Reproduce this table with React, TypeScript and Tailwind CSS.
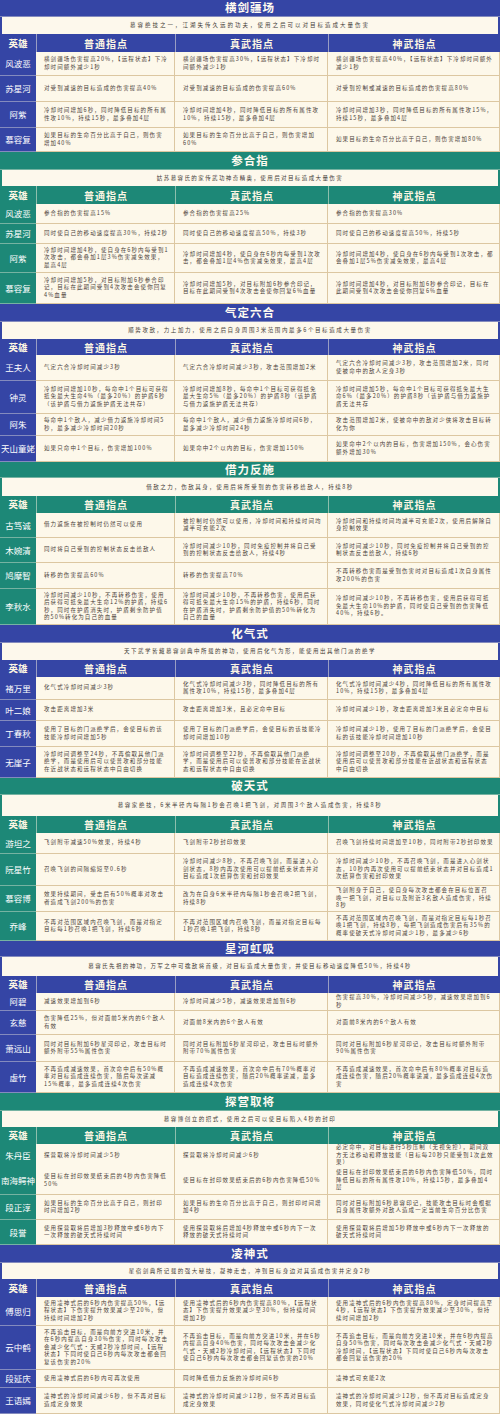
import React from "react";

type Row = { name: string; h: string; cells: [string, string, string] };
type Sec = {
  title: string;
  desc: string;
  track: string;
  theme: "blue" | "teal";
  titleH: string;
  descH: string;
  headH: string;
  rows: Row[];
};

const THEME = {
  blue: { bg: "bg-[#3545a5]", edge: "border-[#3545a5]" },
  teal: { bg: "bg-[#1d8877]", edge: "border-[#1d8877]" },
};

const sections: Sec[] = [
  {
    title: "横剑疆场",
    desc: "慕容绝技之一，江湖失传久远的功夫，使用之后可以对目标造成大量伤害",
    track: "tracking-[2px]",
    theme: "blue",
    titleH: "h-[17px]",
    descH: "h-[17px]",
    headH: "h-[18px]",
    rows: [
      {
        name: "风波恶",
        h: "h-[24px]",
        cells: [
          "横剑疆场伤害提高20%，【远程状态】下冷却时间额外减少1秒",
          "横剑疆场伤害提高30%，【远程状态】下冷却时间额外减少1秒",
          "横剑疆场伤害提高40%，【远程状态】下冷却时间额外减少1秒",
        ],
      },
      {
        name: "苏星河",
        h: "h-[26px]",
        cells: [
          "对受到减速的目标造成的伤害提高40%",
          "对受到减速的目标造成的伤害提高60%",
          "对受到控制或减速的目标造成的伤害提高80%",
        ],
      },
      {
        name: "阿紫",
        h: "h-[26px]",
        cells: [
          "冷却时间增加6秒，同时降低目标的所有属性攻10%，持续15秒，最多叠加4层",
          "冷却时间增加4秒，同时降低目标的所有属性攻10%，持续15秒，最多叠加4层",
          "冷却时间增加3秒，同时降低目标的所有属性攻15%，持续15秒，最多叠加4层",
        ],
      },
      {
        name: "慕容复",
        h: "h-[24px]",
        cells: [
          "如果目标的生命百分比高于自己，则伤害增加40%",
          "如果目标的生命百分比高于自己，则伤害增加60%",
          "如果目标的生命百分比高于自己，则伤害增加80%",
        ],
      },
    ],
  },
  {
    title: "参合指",
    desc: "姑苏慕容氏的家传武功神奇精奥，使用后对目标造成大量伤害",
    track: "tracking-[1.4px]",
    theme: "teal",
    titleH: "h-[18px]",
    descH: "h-[16px]",
    headH: "h-[18px]",
    rows: [
      {
        name: "风波恶",
        h: "h-[20px]",
        cells: ["参合指的伤害提高15%", "参合指的伤害提高25%", "参合指的伤害提高30%"],
      },
      {
        name: "苏星河",
        h: "h-[20px]",
        cells: [
          "同时使自己的移动速度提高30%，持续2秒",
          "同时使自己的移动速度提高50%，持续3秒",
          "同时使自己的移动速度提高50%，持续5秒",
        ],
      },
      {
        name: "阿紫",
        h: "h-[29px]",
        cells: [
          "冷却时间增加4秒，使自身在6秒内每受到1次攻击，都会叠加1层3%伤害减免效果，最高4层",
          "冷却时间增加4秒，使自身在6秒内每受到1次攻击，都会叠加1层4%伤害减免效果，最高4层",
          "冷却时间增加4秒，使自身在6秒内每受到1次攻击，都会叠加1层5%伤害减免效果，最高4层",
        ],
      },
      {
        name: "慕容复",
        h: "h-[31px]",
        cells: [
          "冷却时间增加5秒，对目标附加6秒参合印记，目标在此期间受到4次攻击会使你回复4%血量",
          "冷却时间增加5秒，对目标附加6秒参合印记，目标在此期间受到4次攻击会使你回复6%血量",
          "冷却时间增加4秒，对目标附加6秒参合印记，目标在此期间受到4次攻击会使你回复6%血量",
        ],
      },
    ],
  },
  {
    title: "气定六合",
    desc: "顺势攻敌，力上加力，使用之后自身周围3米范围内最多6个目标造成大量伤害",
    track: "tracking-[1.6px]",
    theme: "blue",
    titleH: "h-[18px]",
    descH: "h-[17px]",
    headH: "h-[16px]",
    rows: [
      {
        name: "王夫人",
        h: "h-[26px]",
        cells: [
          "气定六合冷却时间减少3秒",
          "气定六合冷却时间减少3秒，攻击范围增加2米",
          "气定六合冷却时间减少3秒，攻击范围增加2米，同时使被命中的敌人定身3秒",
        ],
      },
      {
        name: "钟灵",
        h: "h-[33px]",
        cells: [
          "冷却时间增加10秒，每命中1个目标可获得抵免最大生命4%（最多20%）的护盾6秒（该护盾与借力返施护盾无法共存）",
          "冷却时间增加8秒，每命中1个目标可获得抵免最大生命5%（最多20%）的护盾8秒（该护盾与借力返施护盾无法共存）",
          "冷却时间增加5秒，每命中1个目标可获得抵免最大生命6%（最多20%）的护盾8秒（该护盾与借力返施护盾无法共存",
        ],
      },
      {
        name: "阿朱",
        h: "h-[22px]",
        cells: [
          "每命中1个敌人，减少借力返施冷却时间5秒，最多减少冷却时间20秒",
          "每命中1个敌人，减少借力返施冷却时间6秒，最多减少冷却时间24秒",
          "攻击范围增加2米，使被命中的敌对少侠将攻击目标转化为你",
        ],
      },
      {
        name: "天山童姥",
        h: "h-[26px]",
        cells: [
          "如果只命中1个目标，伤害增加100%",
          "如果命中2个以内的目标，伤害增加150%",
          "如果命中2个以内的目标，伤害增加150%，会心伤害额外增加30%",
        ],
      },
    ],
  },
  {
    title: "借力反施",
    desc: "借敌之力，伤敌其身，使用后将所受到的伤害转移给敌人，持续8秒",
    track: "tracking-[1.5px]",
    theme: "teal",
    titleH: "h-[16px]",
    descH: "h-[18px]",
    headH: "h-[17px]",
    rows: [
      {
        name: "古笃诚",
        h: "h-[25px]",
        cells: [
          "借力返施在被控制时仍然可以使用",
          "被控制时仍然可以使用，冷却时间和持续时间均减半可充能2次",
          "冷却时间和持续时间均减半可充能2次，使用后解除自身控制效果",
        ],
      },
      {
        name: "木婉清",
        h: "h-[25px]",
        cells: [
          "同时将自己受到的控制状态反击给敌人",
          "冷却时间减少10秒，同时免疫控制并将自己受到的控制状态反击给敌人，持续4秒",
          "冷却时间减少10秒，同时免疫控制并将自己受到的控制状态反击给敌人，持续6秒",
        ],
      },
      {
        name: "鸠摩智",
        h: "h-[26px]",
        cells: [
          "转移的伤害提高60%",
          "转移的伤害提高70%",
          "不再转移伤害而是受到伤害时对目标造成1次自身属性攻200%的伤害",
        ],
      },
      {
        name: "李秋水",
        h: "h-[36px]",
        cells: [
          "冷却时间减少10秒，不再转移伤害，使用后获得可抵免最大生命12%的护盾，持续6秒，同时在护盾消失时，护盾剩余防护值的50%转化为自己的血量",
          "冷却时间减少10秒，不再转移伤害，使用后获得可抵免最大生命15%的护盾，持续6秒，同时在护盾消失时，护盾剩余防护值的50%转化为自己的血量",
          "冷却时间减少10秒，不再转移伤害，使用后获得可抵免最大生命10%的护盾，同时使自己受到的伤害降低40%，持续6秒。",
        ],
      },
    ],
  },
  {
    title: "化气式",
    desc: "天下武学皆藏慕容剑典中所载的神功，使用后化气为形，能使用出其他门派的绝学",
    track: "tracking-[1.5px]",
    theme: "blue",
    titleH: "h-[18px]",
    descH: "h-[17px]",
    headH: "h-[17px]",
    rows: [
      {
        name: "褚万里",
        h: "h-[23px]",
        cells: [
          "化气式冷却时间减少3秒",
          "化气式冷却时间减少3秒，同时降低目标的所有属性攻10%，持续15秒，最多叠加4层",
          "化气式冷却时间减少4秒，同时降低目标的所有属性攻10%，持续15秒，最多叠加4层",
        ],
      },
      {
        name: "叶二娘",
        h: "h-[21px]",
        cells: [
          "攻击距离增加3米",
          "攻击距离增加3米，且必定命中目标",
          "冷却时间减少1秒，攻击距离增加3米且必定命中目标",
        ],
      },
      {
        name: "丁春秋",
        h: "h-[26px]",
        cells: [
          "使用了目标的门派绝学后，会使目标的该技能冷却时间增加5秒",
          "使用了目标的门派绝学后，会使目标的该技能冷却时间增加10秒",
          "冷却时间减少1秒，使用了目标的门派绝学后，会使目标的该技能冷却时间增加10秒",
        ],
      },
      {
        name: "无崖子",
        h: "h-[31px]",
        cells: [
          "冷却时间调整至24秒，不再偷取其他门派绝学，而是使用后可以使普攻和部分技能在近战状态和远程状态中自由切换",
          "冷却时间调整至22秒，不再偷取其他门派绝学，而是使用后可以使普攻和部分技能在近战状态和远程状态中自由切换",
          "冷却时间调整至20秒，不再偷取其他门派绝学，而是使用后可以使普攻和部分技能在近战状态和远程状态中自由切换",
        ],
      },
    ],
  },
  {
    title: "破天式",
    desc: "慕容家绝技，6米半径内每隔1秒会召唤1把飞剑，对周围3个敌人造成伤害，持续8秒",
    track: "tracking-[1.6px]",
    theme: "teal",
    titleH: "h-[17px]",
    descH: "h-[21px]",
    headH: "h-[17px]",
    rows: [
      {
        name: "游坦之",
        h: "h-[21px]",
        cells: [
          "飞剑附带减速50%效果，持续4秒",
          "飞剑附带2秒封印效果",
          "召唤飞剑持续时间增加至10秒，同时附带2秒封印效果",
        ],
      },
      {
        name: "阮星竹",
        h: "h-[32px]",
        cells: [
          "召唤飞剑的间隔缩短至0.6秒",
          "冷却时间减少8秒，不再召唤飞剑，而是进入心剑状态，8秒内再次使用可以提前结束状态并对目标造成1次结算伤害和封印效果",
          "冷却时间减少10秒，不再召唤飞剑，而是进入心剑状态，10秒内再次使用可以提前结束状态并对目标造成1次结算伤害和封印效果",
        ],
      },
      {
        name: "慕容博",
        h: "h-[26px]",
        cells: [
          "效果持续期间，受击后有50%概率对攻击者造成飞剑200%的伤害",
          "改为在自身6米半径内每隔1秒会召唤2把飞剑，持续8秒",
          "飞剑附身于自己，使自身每次攻击都会在目标位置召唤一把飞剑，对目标以及附近3名敌人造成伤害，持续8秒",
        ],
      },
      {
        name: "乔峰",
        h: "h-[29px]",
        cells: [
          "不再对范围区域内召唤飞剑，而是对指定目标每1秒召唤1把飞剑，持续6秒",
          "不再对范围区域内召唤飞剑，而是对指定目标每1秒召唤1把飞剑，持续8秒",
          "不再对范围区域内召唤飞剑，而是对指定目标每1秒召唤1把飞剑，持续8秒，每把飞剑造成伤害后有35%的概率使破天式冷却时间减少1秒，最多减少6秒",
        ],
      },
    ],
  },
  {
    title: "星河虹吸",
    desc: "慕容氏先祖的神功，万军之中可擒敌将首级，对目标造成大量伤害，并使目标移动速度降低50%，持续4秒",
    track: "tracking-[1.4px]",
    theme: "blue",
    titleH: "h-[16px]",
    descH: "h-[19px]",
    headH: "h-[17px]",
    rows: [
      {
        name: "阿碧",
        h: "h-[18px]",
        cells: [
          "减速效果增加到6秒",
          "冷却时间减少5秒，减速效果增加到6秒",
          "伤害提高30%，冷却时间减少5秒，减速效果增加到6秒",
        ],
      },
      {
        name: "玄慈",
        h: "h-[24px]",
        cells: [
          "伤害降低25%，但对面前5米内的6个敌人有效",
          "对面前8米内的6个敌人有效",
          "对面前8米内的6个敌人有效",
        ],
      },
      {
        name: "萧远山",
        h: "h-[27px]",
        cells: [
          "同时对目标附加6秒星河印记，攻击目标时额外附带55%属性伤害",
          "同时对目标附加6秒星河印记，攻击目标时额外附带70%属性伤害",
          "同时对目标附加6秒星河印记，攻击目标时额外附带90%属性伤害",
        ],
      },
      {
        name: "虚竹",
        h: "h-[31px]",
        cells: [
          "不再造成减速效果，首次命中后有50%概率对目标造成连续伤害，随后每次递减15%概率，最多造成连续4次伤害",
          "不再造成减速效果，首次命中后有70%概率对目标造成连续伤害，随后20%概率递减，最多造成连续4次伤害",
          "不再造成减速效果，首次命中后有80%概率对目标造成连续伤害，随后20%概率递减，最多造成连续4次伤害",
        ],
      },
    ],
  },
  {
    title: "探营取将",
    desc: "慕容博创立的招式，使用之后可以使目标陷入4秒的封印",
    track: "tracking-[1.5px]",
    theme: "teal",
    titleH: "h-[18px]",
    descH: "h-[16px]",
    headH: "h-[17px]",
    rows: [
      {
        name: "朱丹臣",
        h: "h-[23px]",
        cells: [
          "探营取将冷却时间减少5秒",
          "探营取将冷却时间减少6秒",
          "必定命中，对目标进行5秒压制（无视免控），期间双方无法移动和释放技能（目标每20秒只能受到1次此效果）",
        ],
      },
      {
        name: "南海鳄神",
        h: "h-[28px]",
        cells: [
          "使目标在封印效果结束后的4秒内伤害降低50%",
          "使目标在封印效果结束后的6秒内伤害降低50%",
          "使目标在封印效果结束后的6秒内伤害降低50%，同时降低目标的所有属性攻10%，持续15秒，最多叠加4层",
        ],
      },
      {
        name: "段正淳",
        h: "h-[25px]",
        cells: [
          "如果目标的生命百分比高于自己，则封印时间增加2秒",
          "如果目标的生命百分比高于自己，则封印时间增加4秒",
          "同时对目标附加6秒慕容印记，技能攻击目标时会根据自身属性攻额外对敌人造成一定当前生命百分比伤害",
        ],
      },
      {
        name: "段誉",
        h: "h-[25px]",
        cells: [
          "使用探营取将后增加3秒释放中或6秒内下一次释放的破天式持续时间",
          "使用探营取将后增加4秒释放中或6秒内下一次释放的破天式持续时间",
          "使用探营取将后增加5秒释放中或6秒内下一次释放的破天式持续时间",
        ],
      },
    ],
  },
  {
    title: "凌神式",
    desc: "星宿剑典所记载的强大秘技，凝神走击，冲到目标身边对其造成伤害并定身2秒",
    track: "tracking-[1.5px]",
    theme: "blue",
    titleH: "h-[18px]",
    descH: "h-[16px]",
    headH: "h-[18px]",
    rows: [
      {
        name: "傅思归",
        h: "h-[29px]",
        cells: [
          "使用凌神式后的6秒内伤害提高50%，【远程状态】下伤害提升效果减少至20%，但持续时间增加2秒",
          "使用凌神式后的6秒内伤害提高80%，【远程状态】下伤害提升效果减少至30%，但持续时间增加2秒",
          "使用凌神式后的6秒内伤害提高80%，定身时间提高至4秒，【远程状态】下伤害提升效果减少至30%，但持续时间增加2秒",
        ],
      },
      {
        name: "云中鹤",
        h: "h-[44px]",
        cells: [
          "不再追击目标，而是向前方突进10米，并在6秒内提高自身30%伤害，同时每次攻击会减少化气式·天威2秒冷却时间，【远程状态】下同时使自己6秒内每次攻击都会回复该伤害的20%",
          "不再追击目标，而是向前方突进10米，并在6秒内提高自身40%伤害，同时每次攻击会减少化气式·天威2秒冷却时间，【远程状态】下同时使自己6秒内每次攻击都会回复该伤害的20%",
          "不再追击目标，而是向前方突进10米，并在6秒内提高自身50%伤害，同时每次攻击会减少化气式·天威2秒冷却时间，【远程状态】下同时使自己6秒内每次攻击都会回复该伤害的20%",
        ],
      },
      {
        name: "段延庆",
        h: "h-[18px]",
        cells: [
          "使用凌神式后的6秒内可再次使用",
          "同时降低借力反施的冷却时间6秒",
          "凌神式可充能2次",
        ],
      },
      {
        name: "王语嫣",
        h: "h-[26px]",
        cells: [
          "凌神式的冷却时间减少6秒，但不再对目标造成定身效果",
          "凌神式的冷却时间减少12秒，但不再对目标造成定身效果",
          "凌神式的冷却时间减少12秒，但不再对目标造成定身效果，同时使化气式冷却时间减少2秒",
        ],
      },
    ],
  },
];

const COLS = "grid grid-cols-[36px_139px_153px_172px]";

function Section({ s }: { s: Sec }) {
  const t = THEME[s.theme];
  return (
    <section className="flex flex-col">
      <div
        className={`${t.bg} ${s.titleH} flex items-center justify-center text-[11.5px] font-bold tracking-[1px] text-[#fffaf0] border-b border-[#fdf6e3]/40`}
      >
        {s.title}
      </div>
      <div
        className={`${s.descH} bg-[#fdf8ec] border-x-2 ${t.edge} flex items-center justify-center text-[5.5px] ${s.track} text-[#3f3a35]`}
      >
        {s.desc}
      </div>
      <div className={`${COLS} ${s.headH} ${t.bg} text-[#fdf6e3] font-bold`}>
        <div className="flex items-center justify-center text-[9.5px]">英雄</div>
        {["普通指点", "真武指点", "神武指点"].map((h) => (
          <div
            key={h}
            className="flex items-center justify-center border-l border-[#fdf6e3]/50 text-[10px] tracking-[1px]"
          >
            {h}
          </div>
        ))}
      </div>
      {s.rows.map((r) => (
        <div key={r.name} className={`${COLS} ${r.h}`}>
          <div
            className={`${t.bg} flex items-center justify-center whitespace-nowrap border-b border-[#fdf6e3]/40 text-[8.5px] text-white`}
          >
            {r.name}
          </div>
          {r.cells.map((c, i) => (
            <div
              key={i}
              className="flex items-center bg-[#fdf8ea] border-b border-r border-[#dcc7a1] pl-[8px] pr-[5px] text-[5.5px] leading-[7.5px] tracking-[1.1px] text-[#4a4038]"
            >
              <p>{c}</p>
            </div>
          ))}
        </div>
      ))}
    </section>
  );
}

export default function App() {
  return (
    <div className="w-[500px] h-[1414px] overflow-hidden bg-[#fdf8ea] font-['Noto_Sans_CJK_SC','Noto_Sans',sans-serif]">
      {sections.map((s) => (
        <Section key={s.title} s={s} />
      ))}
    </div>
  );
}
